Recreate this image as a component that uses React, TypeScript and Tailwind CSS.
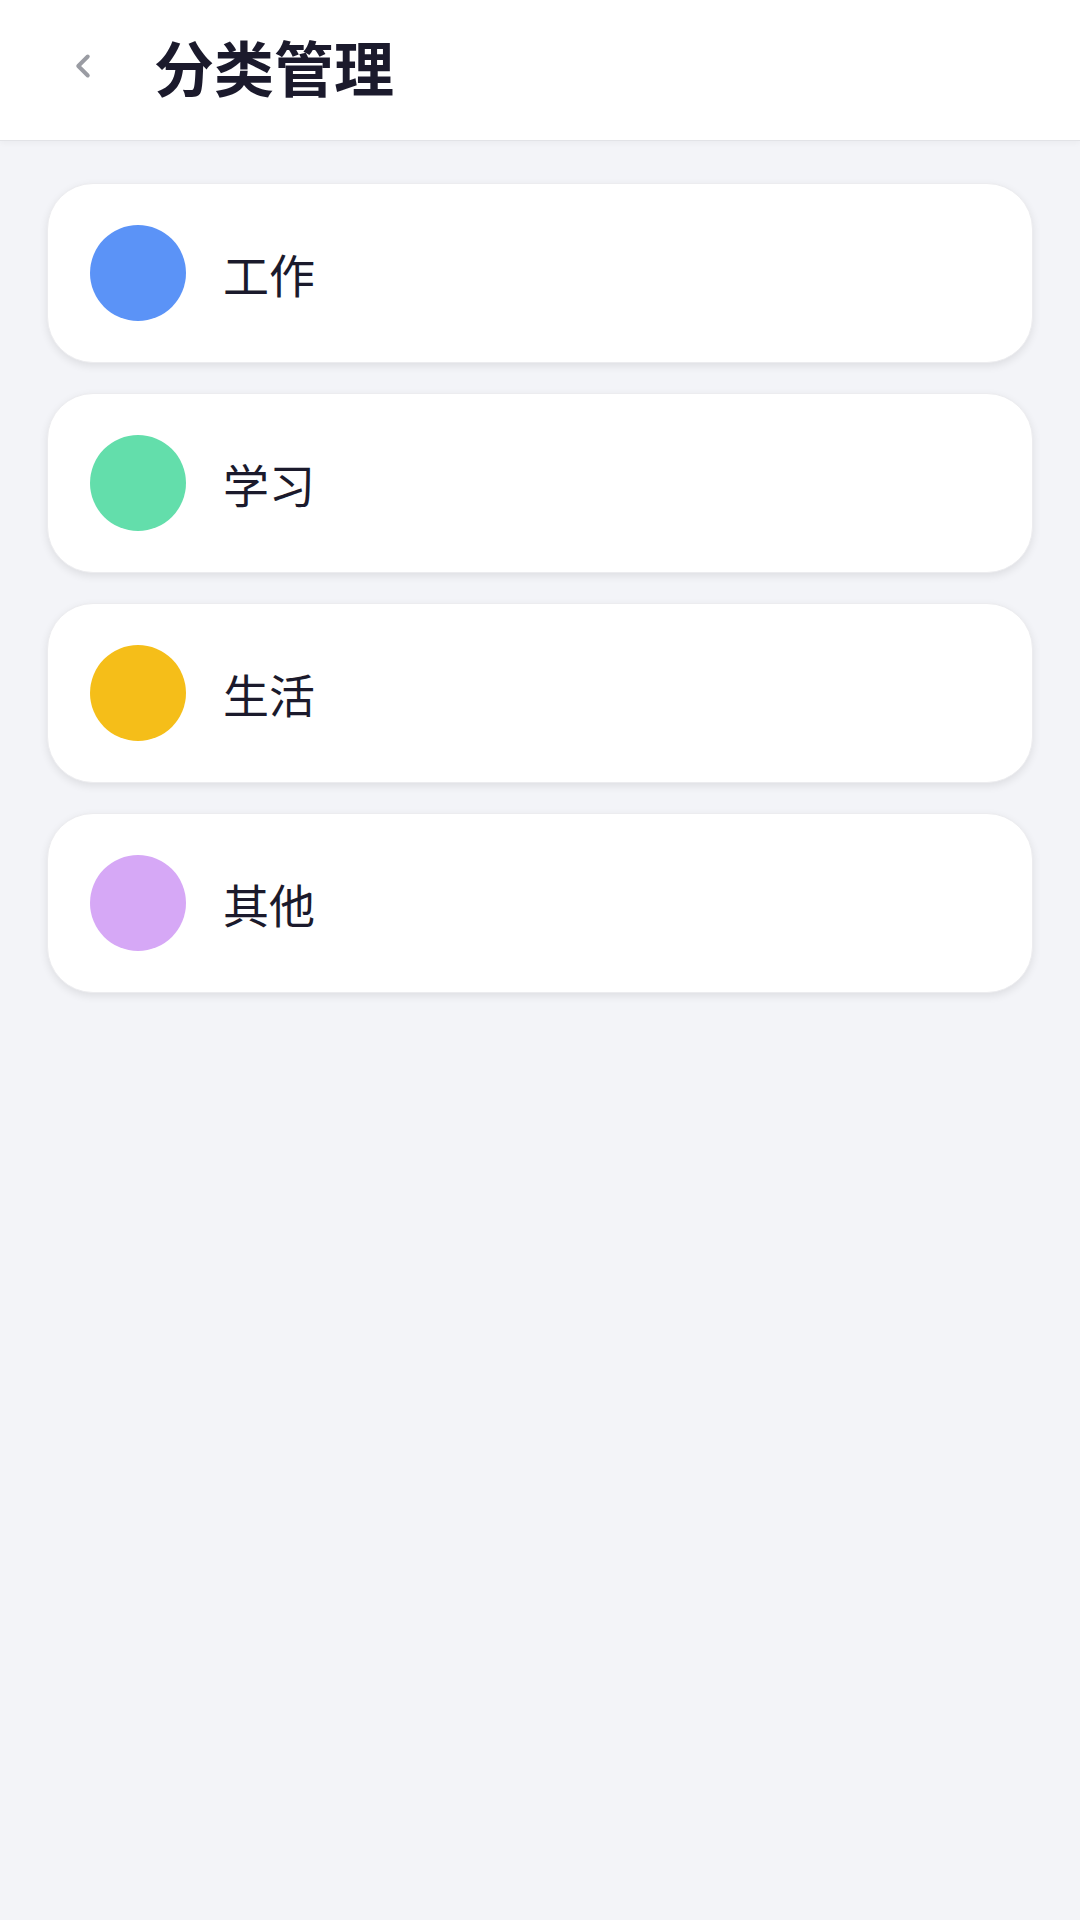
import React from 'react';
import { ChevronLeft } from 'lucide-react';

const categories = [
  { name: '工作', color: 'bg-[#5b93f7]' },
  { name: '学习', color: 'bg-[#63deab]' },
  { name: '生活', color: 'bg-[#f5be19]' },
  { name: '其他', color: 'bg-[#d6a8f6]' },
];

export default function App() {
  return (
    <div
      className="min-h-[1920px] w-full bg-[#f3f4f8] text-[#1b1a2c]"
      style={{ fontFamily: '"Noto Sans CJK SC", "Noto Sans", sans-serif' }}
    >
      <header className="flex h-[141px] items-center border-b border-[#e2e3e7] bg-white pb-[8px] shadow-[0_2px_6px_rgba(0,0,0,0.04)]">
        <button className="ml-[64px] flex h-[38px] w-[38px] items-center justify-center text-[#9a9ca3]">
          <ChevronLeft size={38} strokeWidth={2.5} />
        </button>
        <h1 className="ml-[52px] text-[60px] font-bold leading-none">分类管理</h1>
      </header>

      <div className="flex flex-col gap-[30px] px-[47px] pt-[42px]">
        {categories.map((c) => (
          <div
            key={c.name}
            className="flex h-[180px] items-center gap-[37px] rounded-[46px] border border-[#ececef] bg-white px-[42px] shadow-[0_3px_8px_rgba(0,0,0,0.09)]"
          >
            <div className={`h-[96px] w-[96px] shrink-0 rounded-full ${c.color}`} />
            <span className="text-[46px] leading-none">{c.name}</span>
          </div>
        ))}
      </div>
    </div>
  );
}
